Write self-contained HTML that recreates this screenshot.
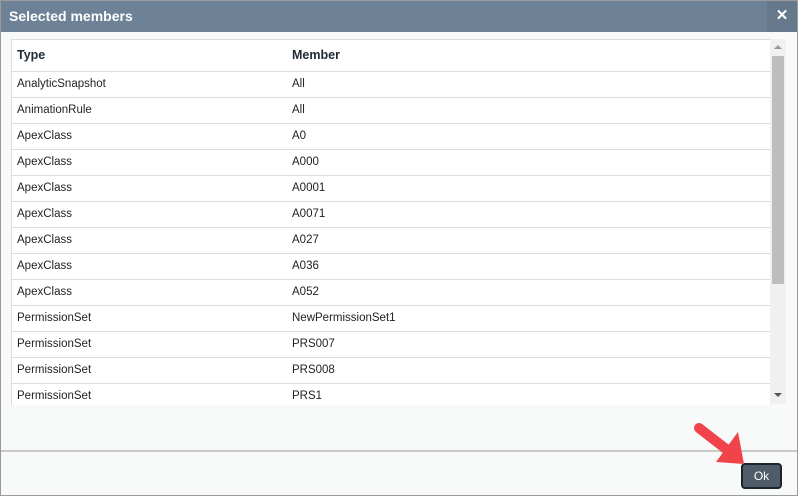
<!DOCTYPE html>
<html><head><style>
body{margin:0;width:798px;height:496px;overflow:hidden;font-family:"Liberation Sans",sans-serif;background:#fff}
.dlg{position:absolute;left:0;top:0;width:796px;height:494px;border:1px solid #9a9a9a;background:#f8f9f9}
.hd{position:absolute;left:0;top:0;width:796px;height:31px;background:#6d8297;color:#fff;font-size:14px;font-weight:bold;line-height:30px}
.hd span{margin-left:8px}
.x{position:absolute;right:0;top:0;width:30px;height:31px;background:#66798c;text-align:center;font-size:15px;line-height:30px}
.tb{position:absolute;left:10px;top:38px;width:758px;height:365px;background:#fff;border:1px solid #ddd;border-bottom:none;overflow:hidden}
.r{height:25px;border-bottom:1px solid #dcdcdc;font-size:11.5px;color:#222;line-height:25px;position:relative}
.r.h{height:31px;line-height:31px;font-weight:bold;font-size:12.5px;color:#1f2a36}
.r span{position:absolute;left:5px}.r span+span{left:280px}
.sb{position:absolute;left:769px;top:38px;width:16px;height:365px;background:#f0f0f0}
.th{position:absolute;left:2px;top:17px;width:12px;height:228px;background:#bdbdbd}
.sep{position:absolute;left:0;top:449px;width:796px;height:2px;background:#c9c9c9}
.ok{position:absolute;left:740px;top:462px;width:37px;height:22px;background:#4f5d6b;border:2px solid #1e2429;border-radius:4px;color:#fff;font-size:12px;text-align:center;line-height:22px}
</style></head><body>
<div class="dlg">
<div class="hd"><span>Selected members</span><div class="x">✕</div></div>
<div class="tb">
<div class="r h"><span>Type</span><span>Member</span></div>
<div class="r"><span>AnalyticSnapshot</span><span>All</span></div>
<div class="r"><span>AnimationRule</span><span>All</span></div>
<div class="r"><span>ApexClass</span><span>A0</span></div>
<div class="r"><span>ApexClass</span><span>A000</span></div>
<div class="r"><span>ApexClass</span><span>A0001</span></div>
<div class="r"><span>ApexClass</span><span>A0071</span></div>
<div class="r"><span>ApexClass</span><span>A027</span></div>
<div class="r"><span>ApexClass</span><span>A036</span></div>
<div class="r"><span>ApexClass</span><span>A052</span></div>
<div class="r"><span>PermissionSet</span><span>NewPermissionSet1</span></div>
<div class="r"><span>PermissionSet</span><span>PRS007</span></div>
<div class="r"><span>PermissionSet</span><span>PRS008</span></div>
<div class="r"><span>PermissionSet</span><span>PRS1</span></div>
</div>
<div class="sb"><div style="position:absolute;left:4px;top:6px;border:4px solid transparent;border-bottom:4px solid #999;border-top:none;width:0"></div><div class="th"></div><div style="position:absolute;left:4px;top:354px;border:4px solid transparent;border-top:4px solid #555;border-bottom:none;width:0"></div></div>
<div class="sep"></div>
<div class="ok">Ok</div>
</div>
<svg style="position:absolute;left:0;top:0" width="798" height="496">
<line x1="699" y1="428" x2="726" y2="449" stroke="#f0434a" stroke-width="10" stroke-linecap="round"/>
<polygon points="716,462 738,432 744,464" fill="#f0434a"/>
</svg>
</body></html>
